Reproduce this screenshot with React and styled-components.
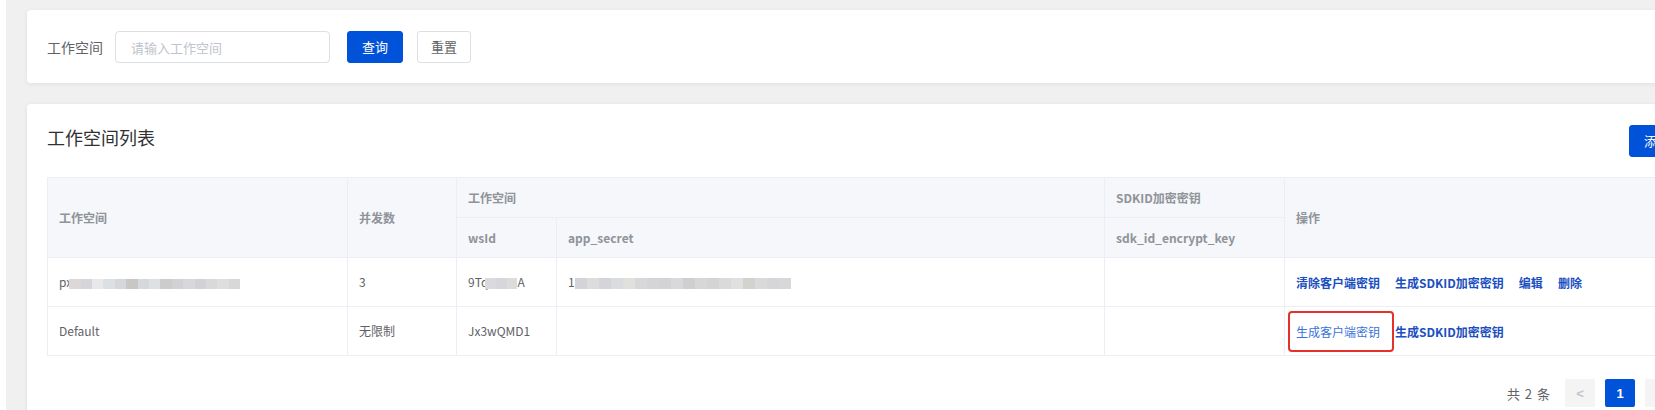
import React from 'react';
import styled, { createGlobalStyle } from 'styled-components';

const Global = createGlobalStyle`
  html, body { margin: 0; padding: 0; background: #fff; overflow: hidden; }
  body { font-family: "Noto Sans CJK SC", "Liberation Sans", sans-serif; color: #606266; }
  * { box-sizing: border-box; }
`;

const Page = styled.div`
  width: 1725px;
  height: 410px;
  padding-left: 6px;
  background: #fff;
`;

const Main = styled.main`
  height: 100%;
  background: #f0f0f0;
  padding: 10px 20px 0 21px;
  display: flex;
  flex-direction: column;
  gap: 21px;
`;

const Card = styled.section`
  background: #fff;
  border-radius: 4px;
  box-shadow: 0 1px 5px rgba(0, 0, 0, 0.07);
  padding: 21px 20px 20px;
  flex-shrink: 0;
`;

const SearchForm = styled.form`
  display: flex;
  align-items: center;
  height: 32px;
`;

const Label = styled.label`
  font-size: 14px;
  color: #606266;
  line-height: 32px;
  margin-right: 12px;
`;

const Input = styled.input`
  width: 215px;
  height: 32px;
  border: 1px solid #dcdfe6;
  border-radius: 4px;
  padding: 0 15px;
  font-family: inherit;
  font-size: 13px;
  color: #606266;
  outline: none;
  &::placeholder { color: #c0c4cc; }
`;

const Button = styled.button`
  height: 32px;
  padding: 0 ${p => (p.$primary ? 14 : 13)}px;
  margin-left: ${p => p.$ml || 0}px;
  border-radius: 3px;
  border: 1px solid ${p => (p.$primary ? '#0052d9' : '#dcdfe6')};
  background: ${p => (p.$primary ? '#0052d9' : '#fff')};
  color: ${p => (p.$primary ? '#fff' : '#606266')};
  font-family: inherit;
  font-size: 13px;
  line-height: 30px;
  cursor: pointer;
`;

const CardHeader = styled.div`
  display: flex;
  justify-content: space-between;
  align-items: flex-start;
  margin-bottom: 20px;
`;

const Title = styled.h2`
  margin: 0;
  font-size: 18px;
  font-weight: 400;
  line-height: 24px;
  color: #303133;
`;

const Table = styled.table`
  width: 1638px;
  table-layout: fixed;
  border-collapse: collapse;
  font-size: 12px;
`;

const Col = styled.col`
  width: ${p => p.$w}px;
`;

const HeadRow = styled.tr`
  height: 40px;
`;

const Th = styled.th`
  background: #f5f7fa;
  border: 1px solid #ebeef5;
  padding: 0 11px;
  text-align: left;
  font-weight: 700;
  color: #909399;
  line-height: 18px;
  vertical-align: middle;
`;

const BodyRow = styled.tr`
  height: 49px;
`;

const Td = styled.td`
  border: 1px solid #ebeef5;
  padding: 0 11px;
  color: #606266;
  line-height: 18px;
  vertical-align: middle;
  white-space: nowrap;
`;

const Mosaic = styled.span`
  display: inline-flex;
  vertical-align: middle;
  height: ${p => p.$h}px;
  margin-left: ${p => p.$ml || 0}px;
`;

const Tile = styled.span`
  flex: 1;
  background: ${p => p.$c};
`;

const Links = styled.div`
  display: flex;
  align-items: center;
  gap: 15px;
`;

const Link = styled.a`
  position: relative;
  font-size: 12px;
  line-height: 17px;
  font-weight: ${p => (p.$light ? 400 : 700)};
  color: ${p => (p.$light ? '#3a72da' : '#1b4fbf')};
  text-decoration: none;
  cursor: pointer;
`;

const Highlight = styled.span`
  position: absolute;
  left: -8px;
  right: -14px;
  top: -12px;
  bottom: -12px;
  border: 2px solid #e5312b;
  border-radius: 4px;
  pointer-events: none;
`;

const Pager = styled.div`
  display: flex;
  justify-content: flex-end;
  align-items: center;
  margin-top: 23px;
  padding-right: 10px;
  gap: 10px;
`;

const Total = styled.span`
  font-size: 13px;
  color: #606266;
  margin-right: 4px;
  letter-spacing: 1px;
`;

const PageBtn = styled.button`
  width: 30px;
  height: 28px;
  border: none;
  border-radius: 2px;
  background: ${p => (p.$active ? '#0052d9' : '#f4f4f5')};
  color: ${p => (p.$active ? '#fff' : '#c0c4cc')};
  font-family: "Liberation Sans", sans-serif;
  font-size: 13px;
  font-weight: 700;
  padding: 0;
  display: flex;
  align-items: center;
  justify-content: center;
`;

const blur1 = ['#dcd8d8', '#d4d6da', '#e9e9e9', '#dde0e3', '#d5d7da', '#c9c6c6', '#d6d8dc', '#dfe0e2', '#cdcbcc', '#d2d2d4', '#d8d8da', '#d2d2d4', '#d9d9db', '#dedede', '#d8d8d8'];
const blur2 = ['#d8dadd', '#d6d7da', '#dcdcdc'];
const blur3 = ['#d3d4d8', '#dcdcdc', '#d4d5d9', '#dadcdf', '#e0e0dc', '#d8d8da', '#d4d5d7', '#d3d3d5', '#d9d9db', '#cfcfcf', '#d6d7d9', '#d4d4d4', '#dadada', '#e0e0e0', '#d3d2cf', '#d8dadc', '#d6d6d8', '#d8d8d8'];

function Blur({ colors, w, h, ml }) {
  return (
    <Mosaic $h={h} $ml={ml} style={{ width: w }}>
      {colors.map((c, i) => <Tile key={i} $c={c} />)}
    </Mosaic>
  );
}

export default function App() {
  return (
    <Page>
      <Global />
      <Main>
        <Card>
          <SearchForm onSubmit={e => e.preventDefault()}>
            <Label>工作空间</Label>
            <Input placeholder="请输入工作空间" />
            <Button type="button" $primary $ml={17}>查询</Button>
            <Button type="button" $ml={14}>重置</Button>
          </SearchForm>
        </Card>
        <Card>
          <CardHeader>
            <Title>工作空间列表</Title>
            <Button type="button" $primary>添加</Button>
          </CardHeader>
          <Table>
            <colgroup>
              <Col $w={300} />
              <Col $w={109} />
              <Col $w={100} />
              <Col $w={548} />
              <Col $w={180} />
              <Col $w={401} />
            </colgroup>
            <thead>
              <HeadRow>
                <Th rowSpan={2}>工作空间</Th>
                <Th rowSpan={2}>并发数</Th>
                <Th colSpan={2}>工作空间</Th>
                <Th>SDKID加密密钥</Th>
                <Th rowSpan={2}>操作</Th>
              </HeadRow>
              <HeadRow>
                <Th>wsId</Th>
                <Th>app_secret</Th>
                <Th>sdk_id_encrypt_key</Th>
              </HeadRow>
            </thead>
            <tbody>
              <BodyRow>
                <Td>px<Blur colors={blur1} w={171} h={10} ml={-3} /></Td>
                <Td>3</Td>
                <Td>9Tq<Blur colors={blur2} w={32} h={11} ml={-3} />A</Td>
                <Td>1<Blur colors={blur3} w={216} h={11} ml={0} /></Td>
                <Td />
                <Td>
                  <Links>
                    <Link>清除客户端密钥</Link>
                    <Link>生成SDKID加密密钥</Link>
                    <Link>编辑</Link>
                    <Link>删除</Link>
                  </Links>
                </Td>
              </BodyRow>
              <BodyRow>
                <Td>Default</Td>
                <Td>无限制</Td>
                <Td>Jx3wQMD1</Td>
                <Td />
                <Td />
                <Td>
                  <Links>
                    <Link $light>生成客户端密钥<Highlight /></Link>
                    <Link>生成SDKID加密密钥</Link>
                  </Links>
                </Td>
              </BodyRow>
            </tbody>
          </Table>
          <Pager>
            <Total>共 2 条</Total>
            <PageBtn type="button">&lt;</PageBtn>
            <PageBtn type="button" $active>1</PageBtn>
            <PageBtn type="button">&gt;</PageBtn>
          </Pager>
        </Card>
      </Main>
    </Page>
  );
}
